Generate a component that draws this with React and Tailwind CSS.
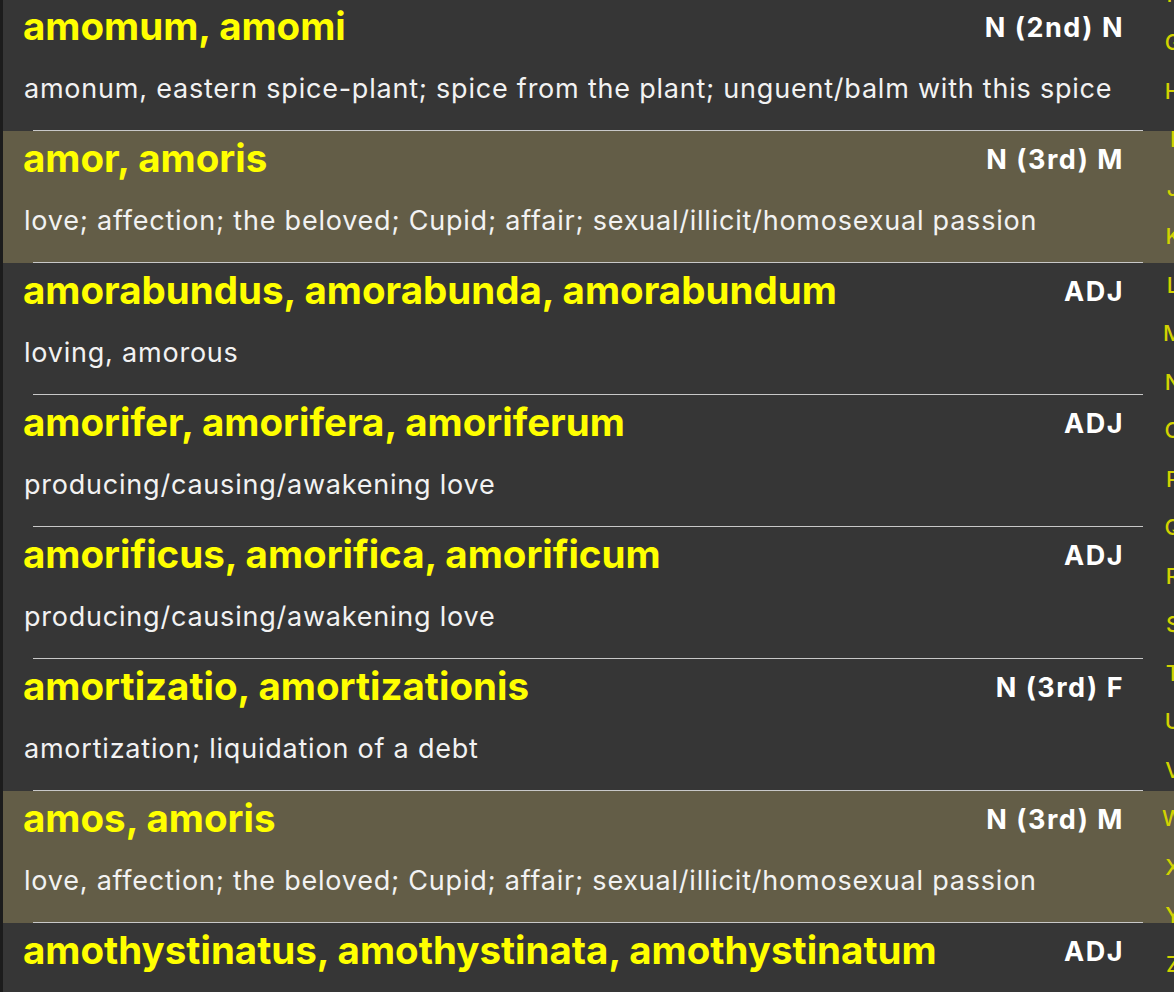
const entries = [
  {
    term: 'amomum, amomi',
    tag: 'N (2nd) N',
    def: 'amonum, eastern spice-plant; spice from the plant; unguent/balm with this spice',
  },
  {
    term: 'amor, amoris',
    tag: 'N (3rd) M',
    def: 'love; affection; the beloved; Cupid; affair; sexual/illicit/homosexual passion',
    marked: true,
  },
  { term: 'amorabundus, amorabunda, amorabundum', tag: 'ADJ', def: 'loving, amorous' },
  { term: 'amorifer, amorifera, amoriferum', tag: 'ADJ', def: 'producing/causing/awakening love' },
  { term: 'amorificus, amorifica, amorificum', tag: 'ADJ', def: 'producing/causing/awakening love' },
  { term: 'amortizatio, amortizationis', tag: 'N (3rd) F', def: 'amortization; liquidation of a debt' },
  {
    term: 'amos, amoris',
    tag: 'N (3rd) M',
    def: 'love, affection; the beloved; Cupid; affair; sexual/illicit/homosexual passion',
    marked: true,
  },
  { term: 'amothystinatus, amothystinata, amothystinatum', tag: 'ADJ', def: '' },
];

const letters = 'FGHIJKLMNOPQRSTUVWXYZ'.split('');

function Row({ entry }) {
  return (
    <div className={`relative h-[132px] shrink-0 ${entry.marked ? 'bg-[#635d47]' : ''}`}>
      <div className="flex items-start justify-between pl-[20px] pr-[50px] pt-[7px]">
        <span className="text-[38.5px] leading-[40px] font-bold text-[#ffff00] whitespace-nowrap">{entry.term}</span>
        <span className="mt-[9px] text-[27px] leading-[26px] font-bold tracking-[1.5px] text-white whitespace-nowrap">
          {entry.tag}
        </span>
      </div>
      <div className="mt-[29px] pl-[21px] text-[27px] leading-[27px] tracking-[0.78px] text-[#f2f2f2] whitespace-nowrap">
        {entry.def}
      </div>
      <div className="absolute bottom-0 left-[30px] right-[31px] h-px bg-[#c8c8c8]" />
    </div>
  );
}

export default function App() {
  return (
    <div
      className="relative flex h-[992px] w-[1174px] overflow-hidden bg-[#363636]"
      style={{ fontFamily: 'Inter, "Liberation Sans", Arial, sans-serif' }}
    >
      <div className="w-[3px] shrink-0 bg-[#1c1c1c]" />
      <div className="flex flex-1 flex-col -mt-px">
        {entries.map((e) => (
          <Row key={e.term} entry={e} />
        ))}
      </div>
      <div className="absolute left-[1153px] top-[-30px] w-[40px] flex flex-col">
        {letters.map((l) => (
          <div key={l} className="h-[48.5px] flex items-center justify-center text-[22px] font-medium text-[#d2d200]">
            {l}
          </div>
        ))}
      </div>
    </div>
  );
}
